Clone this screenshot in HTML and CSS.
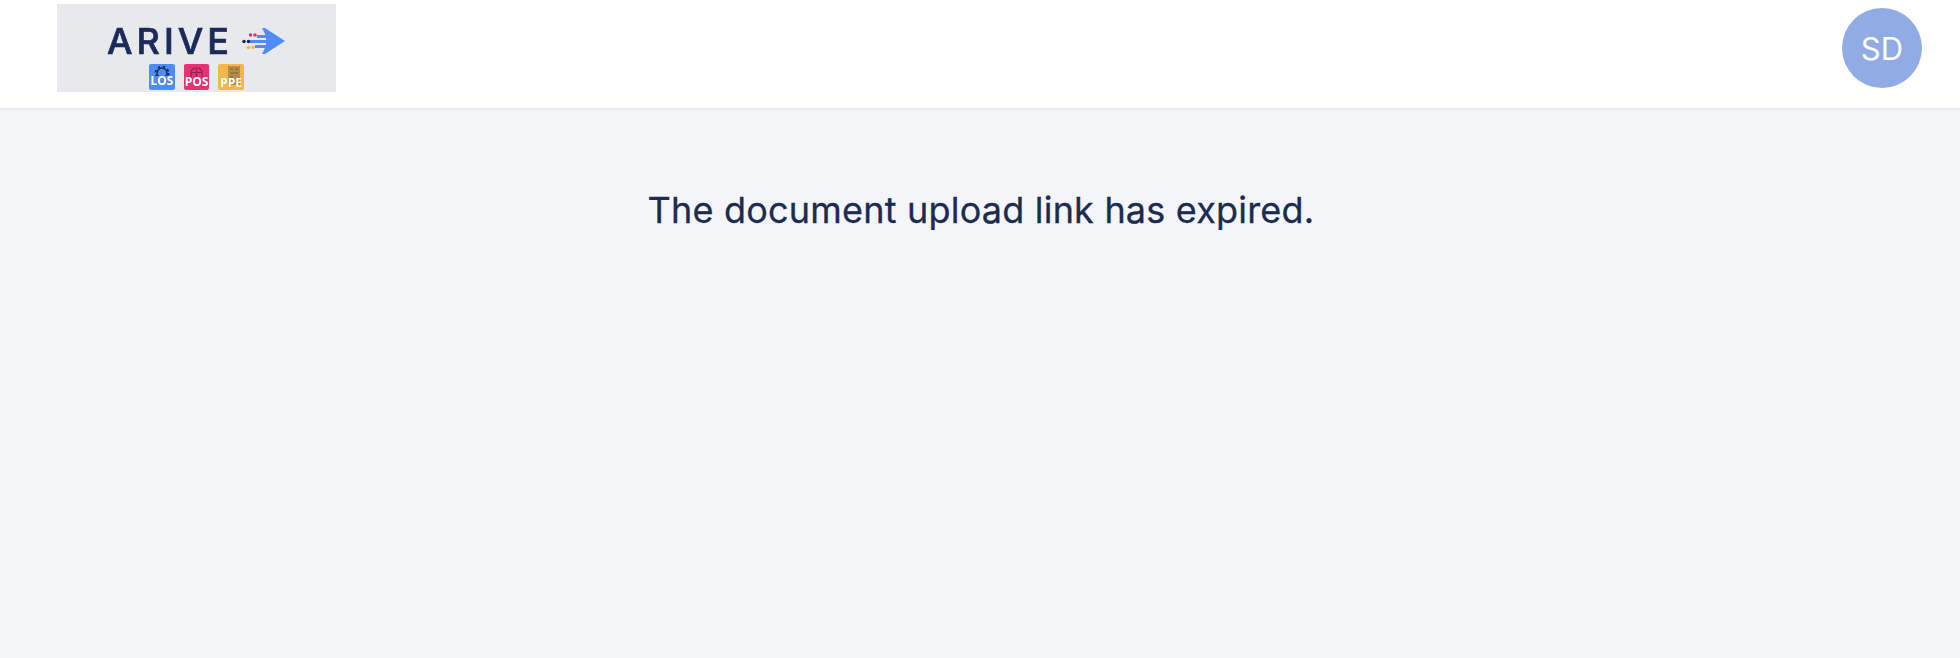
FILE: index.html
```html
<!DOCTYPE html>
<html lang="en">
<head>
    <meta charset="UTF-8">
    <meta name="viewport" content="width=device-width, initial-scale=1.0">
    <title>Document upload</title>
    <link rel="stylesheet" href="styles.css">
</head>
<body>
    <header class="topbar">
        <svg class="logo" width="279" height="88" viewBox="0 0 279 88" role="img" aria-label="ARIVE">
            <defs>
                <filter id="soft"><feGaussianBlur stdDeviation="0.5"/></filter>
            </defs>
            <rect width="279" height="88" fill="#e8e9ed"/>
            <g filter="url(#soft)">
                <text class="logo-word" x="50" y="50" textLength="122">ARIVE</text>
                <!-- arrow -->
                <path d="M205 24h3l20 13-20 13h-3l4-8v-10z" fill="#4f8df5"/>
                <path d="M200 32.500h12M193 37.500h18M198 42.500h14" stroke="#4f8df5" stroke-width="3.200"/>
                <circle cx="187" cy="37.500" r="1.800" fill="#1c2a5a"/>
                <circle cx="191.500" cy="37.500" r="1.800" fill="#1c2a5a"/>
                <circle cx="193.500" cy="31" r="1.800" fill="#e5306f"/>
                <circle cx="198" cy="31" r="1.800" fill="#e5306f"/>
                <circle cx="191.500" cy="43.500" r="1.800" fill="#f2b64b"/>
                <circle cx="196" cy="43.500" r="1.800" fill="#f2b64b"/>
                <!-- product badges -->
                <rect x="92" y="60" width="26" height="26" rx="2" fill="#4f8df5"/>
                <circle cx="105" cy="69" r="5" fill="none" stroke="#1c2a5a" stroke-width="1.400"/>
                <circle cx="105" cy="69" r="6.500" fill="none" stroke="#1c2a5a" stroke-width="1.800" stroke-dasharray="2.500 2.600"/>
                <rect x="96" y="72" width="18" height="9" fill="#4f8df5"/>
                <text class="badge-text" x="105" y="80.500">LOS</text>
                <rect x="127" y="60" width="25" height="26" rx="2" fill="#e5306f"/>
                <path d="M134 73v-6l3-3h5l3 3v6M139.500 64v9M134 68.500h11" fill="none" stroke="#8c2458" stroke-width="1.100"/>
                <text class="badge-text" x="139.500" y="82">POS</text>
                <rect x="161" y="60" width="26" height="26" rx="2" fill="#f2b64b"/>
                <rect x="171" y="62" width="12" height="19" fill="#b78c4a"/>
                <path d="M173 65h3M178 65h3M173 69h8M173 73h3" stroke="#7f6238" stroke-width="1.100"/>
                <text class="badge-text" x="174" y="82.500">PPE</text>
            </g>
        </svg>
        <div class="avatar">SD</div>
    </header>
    <main class="content">
        <p class="message">The document upload link has expired.</p>
    </main>
</body>
</html>
```

FILE: styles.css
```css
html, body {
    height: 100%;
}
body {
    margin: 0;
    font-family: Inter, "Noto Sans", sans-serif;
    background: #f3f5f9;
    color: #1c2b50;
    overflow: hidden;
}
.topbar {
    display: flex;
    justify-content: space-between;
    align-items: flex-start;
    height: 108px;
    box-sizing: border-box;
    padding: 4px 38px 0 57px;
    background: white;
    box-shadow: 0 1px 3px rgba(0,0,0,0.1);
}
.logo {
    display: block;
    flex: none;
}
.logo-word {
    font-family: Inter, sans-serif;
    font-size: 36px;
    font-weight: 500;
    fill: #1c2a5a;
    stroke: #1c2a5a;
    stroke-width: 0.7px;
}
.badge-text {
    font-family: "Open Sans", sans-serif;
    font-size: 12px;
    font-weight: 700;
    text-anchor: middle;
    fill: white;
}
.avatar {
    display: flex;
    align-items: center;
    justify-content: center;
    width: 80px;
    height: 80px;
    margin-top: 4px;
    border-radius: 50%;
    background: #91abe4;
    color: white;
    font-size: 31px;
}
.content {
    padding: 80px 0 0 2px;
    text-align: center;
}
.message {
    margin: 0;
    font-size: 36px;
    line-height: 44px;
    letter-spacing: 0.2px;
    -webkit-text-stroke: 0.3px #1c2b50;
}
```
